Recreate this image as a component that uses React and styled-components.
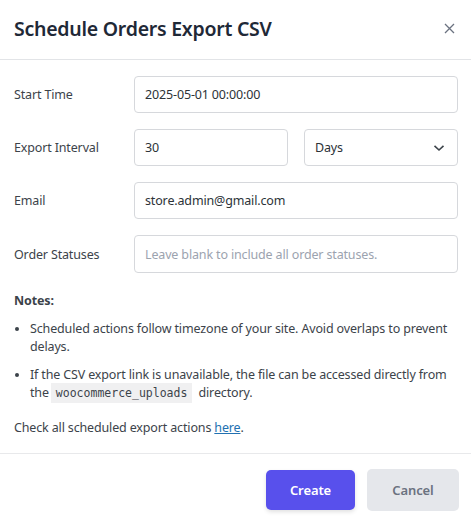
import React from "react";
import styled, { createGlobalStyle } from "styled-components";

const Global = createGlobalStyle`
  html, body { margin: 0; padding: 0; background: #ffffff; }
  body { font-family: "Noto Sans", "Open Sans", sans-serif; color: #3c434a; }
  * { box-sizing: border-box; }
`;

const Modal = styled.div`
  width: 471px;
  height: 525px;
  display: flex;
  flex-direction: column;
  background: #fff;
`;

const Header = styled.div`
  height: 60px;
  display: flex;
  align-items: center;
  justify-content: space-between;
  padding: 0 14px 2px 14px;
  border-bottom: 1px solid #e2e4e7;
`;

const Title = styled.h2`
  margin: 0;
  font-size: 19.5px;
  font-weight: 600;
  color: #1f2937;
  letter-spacing: -0.25px;
`;

const Close = styled.button`
  border: 0;
  background: none;
  padding: 0;
  width: 14px;
  height: 14px;
  display: flex;
  align-items: center;
  justify-content: center;
  color: #6b7280;
  margin-right: 1px;
`;

const Body = styled.div`
  padding: 16px 13px 0 14px;
  display: flex;
  flex-direction: column;
  flex: 1;
  font-size: 12.5px;
  letter-spacing: -0.15px;
`;

const Form = styled.div`
  display: grid;
  grid-template-columns: 120px 1fr;
  row-gap: 16px;
  align-items: center;
`;

const Label = styled.label`
  color: #3c434a;
`;

const Pair = styled.div`
  display: grid;
  grid-template-columns: 1fr 1fr;
  column-gap: 16px;
`;

const Field = styled.div`
  height: ${(p) => (p.$tall ? "38px" : "37px")};
  border: 1px solid #d6d8dc;
  border-radius: 4px;
  display: flex;
  align-items: center;
  justify-content: space-between;
  padding: 0 12px 0 10px;
  color: ${(p) => (p.$placeholder ? "#9ca3af" : "#2c3338")};
  background: #fff;
`;

const Notes = styled.div`
  margin-top: 19px;
  line-height: 18.5px;
  color: #3c434a;
`;

const NotesTitle = styled.div`
  font-weight: 700;
  margin-bottom: 9px;
`;

const List = styled.ul`
  margin: 0;
  padding: 0 0 0 16px;
  list-style: disc;
  li { padding-left: 0; margin-bottom: 9px; }
  li::marker { font-size: 11px; }
`;

const Code = styled.code`
  font-family: "DejaVu Sans Mono", "Liberation Mono", monospace;
  font-size: 11.5px;
  line-height: 14px;
  letter-spacing: 0;
  background: #f0f0f1;
  padding: 3px 5px;
  margin: 0 3px 0 2px;
`;

const Check = styled.p`
  margin: 16px 0 0;
`;

const Link = styled.a`
  color: #2271b1;
  text-decoration: underline;
`;

const Footer = styled.div`
  border-top: 1px solid #e8e9eb;
  height: 72px;
  display: flex;
  justify-content: flex-end;
  align-items: center;
  gap: 12px;
  padding: 0 12px 0 0;
`;

const Button = styled.button`
  font-family: inherit;
  font-size: 13px;
  font-weight: 600;
  letter-spacing: -0.1px;
  border: 0;
  border-radius: 5px;
  width: ${(p) => (p.$primary ? "89px" : "92px")};
  height: ${(p) => (p.$primary ? "40px" : "42px")};
  background: ${(p) => (p.$primary ? "#5850ec" : "#e5e7eb")};
  color: ${(p) => (p.$primary ? "#ffffff" : "#6b7280")};
  box-shadow: ${(p) => (p.$primary ? "0 2px 4px rgba(0,0,0,0.12)" : "none")};
  cursor: pointer;
`;

export default function App() {
  return (
    <>
      <Global />
      <Modal>
        <Header>
          <Title>Schedule Orders Export CSV</Title>
          <Close aria-label="Close">
            <svg width="11" height="11" viewBox="0 0 11 11" fill="none" stroke="currentColor" strokeWidth="1.3">
              <path d="M1 1 L10 10 M10 1 L1 10" />
            </svg>
          </Close>
        </Header>
        <Body>
          <Form>
            <Label>Start Time</Label>
            <Field>2025-05-01 00:00:00</Field>
            <Label>Export Interval</Label>
            <Pair>
              <Field>30</Field>
              <Field>
                Days
                <svg width="12" height="8" viewBox="0 0 12 8" fill="none" stroke="#3c434a" strokeWidth="1.6">
                  <path d="M1.5 1.8 L6 6 L10.5 1.8" />
                </svg>
              </Field>
            </Pair>
            <Label>Email</Label>
            <Field>store.admin@gmail.com</Field>
            <Label>Order Statuses</Label>
            <Field $tall $placeholder>Leave blank to include all order statuses.</Field>
          </Form>
          <Notes>
            <NotesTitle>Notes:</NotesTitle>
            <List>
              <li>Scheduled actions follow timezone of your site. Avoid overlaps to prevent delays.</li>
              <li>
                If the CSV export link is unavailable, the file can be accessed directly from the
                <Code>woocommerce_uploads</Code> directory.
              </li>
            </List>
            <Check>
              Check all scheduled export actions <Link href="#">here</Link>.
            </Check>
          </Notes>
        </Body>
        <Footer>
          <Button $primary>Create</Button>
          <Button>Cancel</Button>
        </Footer>
      </Modal>
    </>
  );
}
